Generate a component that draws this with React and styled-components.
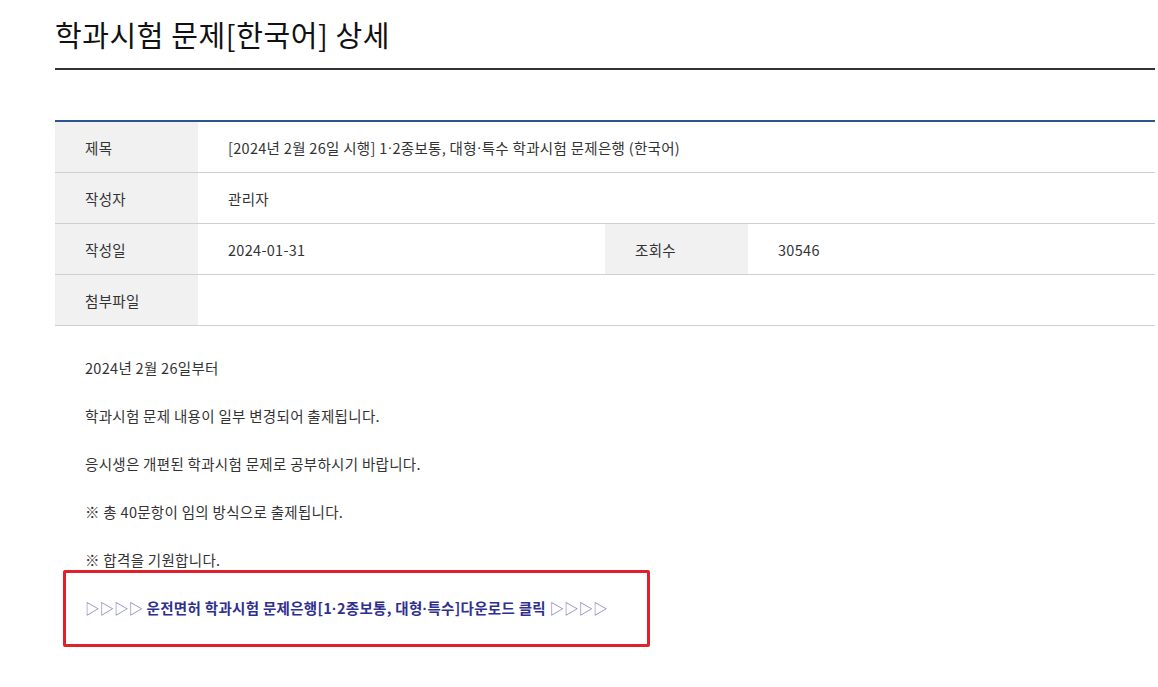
import React from "react";
import styled, { createGlobalStyle } from "styled-components";

const Global = createGlobalStyle`
  html, body { margin: 0; padding: 0; background: #fff; }
  body {
    font-family: "Noto Sans CJK KR", "Noto Sans", "Liberation Sans", sans-serif;
    color: #333;
  }
`;

const Page = styled.div`
  width: 1100px;
  padding: 0 0 40px 55px;
`;

const Title = styled.h2`
  margin: 0;
  padding-top: 15px;
  padding-bottom: 14px;
  font-size: 29px;
  line-height: 39px;
  letter-spacing: 0.6px;
  font-weight: 400;
  color: #111;
  border-bottom: 2px solid #333;
`;

const Table = styled.div`
  margin-top: 50px;
  border-top: 2px solid #2b5592;
`;

const Row = styled.div`
  display: flex;
  height: 50px;
  border-bottom: 1px solid #cfcfcf;
`;

const Label = styled.div`
  flex: 0 0 143px;
  box-sizing: border-box;
  padding-left: 30px;
  display: flex;
  align-items: center;
  background: #f1f1f1;
  font-size: 14.5px;
  letter-spacing: 0.3px;
  color: #333;
`;

const Value = styled.div`
  flex: ${(p) => (p.$grow ? "1 1 auto" : "0 0 407px")};
  box-sizing: border-box;
  padding-left: 30px;
  display: flex;
  align-items: center;
  font-size: 14.5px;
  letter-spacing: 0.3px;
  color: #333;
  white-space: pre;
`;

const Dot = styled.span`
  font-family: "Liberation Sans", sans-serif;
  letter-spacing: 0;
`;

const Content = styled.div`
  padding: 30px 0 0 30px;
  display: flex;
  flex-direction: column;
  gap: 24px;
`;

const Para = styled.p`
  margin: 0;
  font-size: 14.5px;
  letter-spacing: 0.3px;
  line-height: 24px;
  color: #333;
`;

const LinkBox = styled.div`
  width: 587px;
  box-sizing: border-box;
  margin: -26px 0 0 -22px;
  padding: 23px 0 23px 19px;
  border: 3px solid #e0202b;
  border-radius: 2px;
`;

const DownloadLink = styled.a`
  display: block;
  font-size: 14.5px;
  letter-spacing: 0.3px;
  line-height: 24px;
  font-weight: 700;
  color: #2f2f8f;
  text-decoration: none;
  white-space: nowrap;
`;

const Arrows = styled.span`
  font-weight: 400;
  font-size: 14.5px;
  letter-spacing: 0;
  color: #7373b2;
`;

export default function App() {
  return (
    <>
      <Global />
      <Page>
        <Title>학과시험 문제[한국어] 상세</Title>
        <Table>
          <Row>
            <Label>제목</Label>
            <Value $grow>
              [2024년 2월 26일 시행] 1<Dot>·</Dot>2종보통, 대형<Dot>·</Dot>특수 학과시험 문제은행 (한국어)
            </Value>
          </Row>
          <Row>
            <Label>작성자</Label>
            <Value $grow>관리자</Value>
          </Row>
          <Row>
            <Label>작성일</Label>
            <Value>2024-01-31</Value>
            <Label>조회수</Label>
            <Value $grow>30546</Value>
          </Row>
          <Row>
            <Label>첨부파일</Label>
            <Value $grow></Value>
          </Row>
        </Table>
        <Content>
          <Para>2024년 2월 26일부터</Para>
          <Para>학과시험 문제 내용이 일부 변경되어 출제됩니다.</Para>
          <Para>응시생은 개편된 학과시험 문제로 공부하시기 바랍니다.</Para>
          <Para>※ 총 40문항이 임의 방식으로 출제됩니다.</Para>
          <Para>※ 합격을 기원합니다.</Para>
          <LinkBox>
            <DownloadLink href="#">
              <Arrows>▷▷▷▷</Arrows> 운전면허 학과시험 문제은행[1<Dot>·</Dot>2종보통, 대형<Dot>·</Dot>특수]다운로드 클릭 <Arrows>▷▷▷▷</Arrows>
            </DownloadLink>
          </LinkBox>
        </Content>
      </Page>
    </>
  );
}
